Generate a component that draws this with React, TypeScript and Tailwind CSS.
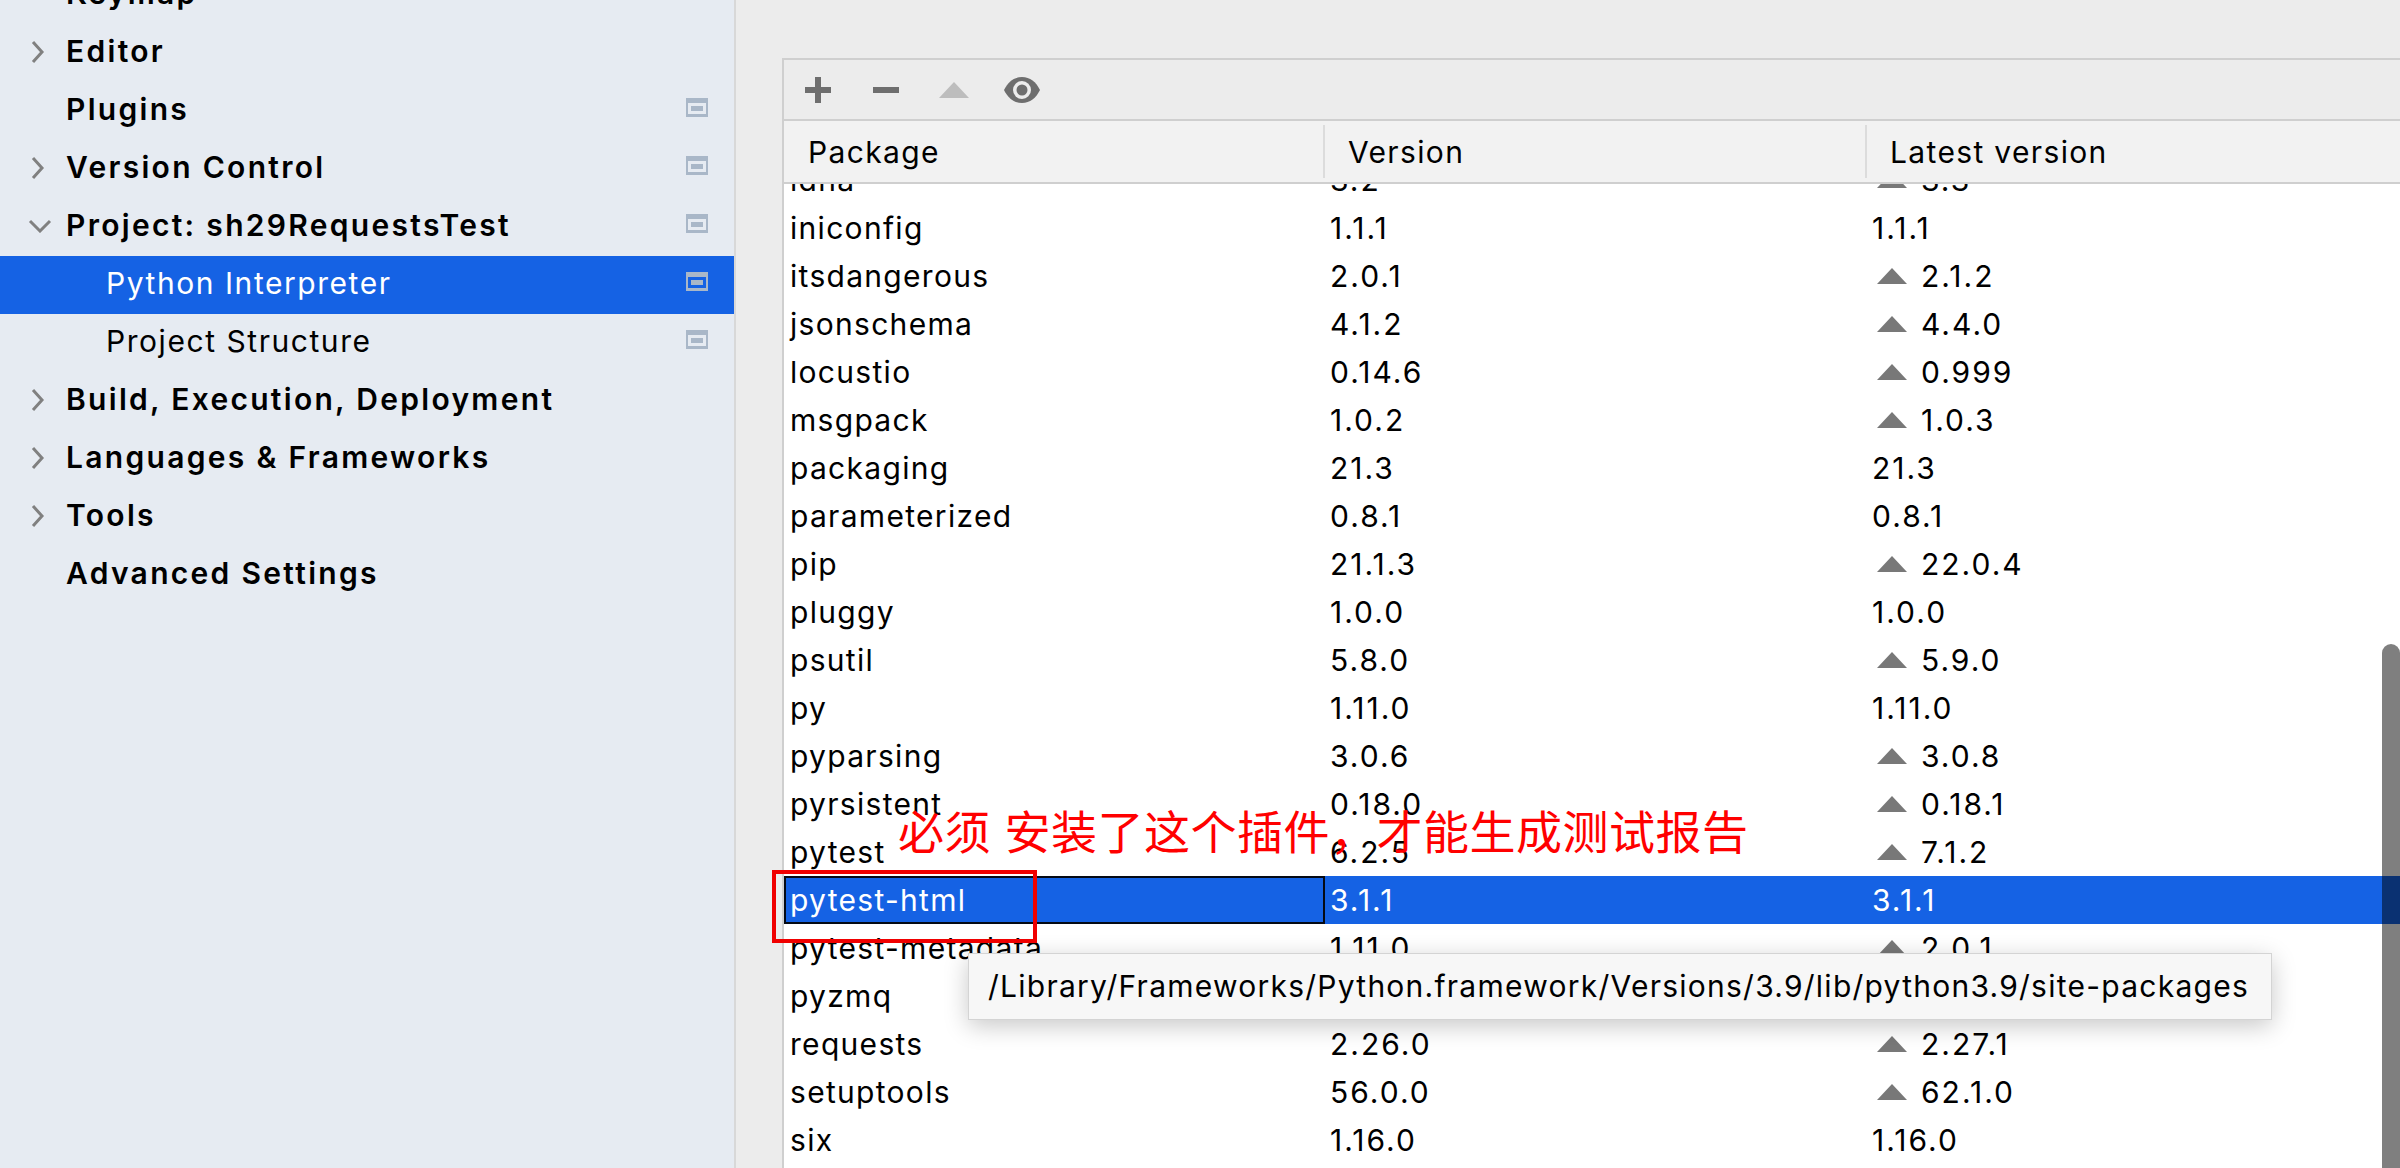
import React from 'react';

type Pkg = { name: string; version: string; latest: string; upgrade?: boolean };

const packages: Pkg[] = [
  { name: 'idna', version: '3.2', latest: '3.3', upgrade: true },
  { name: 'iniconfig', version: '1.1.1', latest: '1.1.1' },
  { name: 'itsdangerous', version: '2.0.1', latest: '2.1.2', upgrade: true },
  { name: 'jsonschema', version: '4.1.2', latest: '4.4.0', upgrade: true },
  { name: 'locustio', version: '0.14.6', latest: '0.999', upgrade: true },
  { name: 'msgpack', version: '1.0.2', latest: '1.0.3', upgrade: true },
  { name: 'packaging', version: '21.3', latest: '21.3' },
  { name: 'parameterized', version: '0.8.1', latest: '0.8.1' },
  { name: 'pip', version: '21.1.3', latest: '22.0.4', upgrade: true },
  { name: 'pluggy', version: '1.0.0', latest: '1.0.0' },
  { name: 'psutil', version: '5.8.0', latest: '5.9.0', upgrade: true },
  { name: 'py', version: '1.11.0', latest: '1.11.0' },
  { name: 'pyparsing', version: '3.0.6', latest: '3.0.8', upgrade: true },
  { name: 'pyrsistent', version: '0.18.0', latest: '0.18.1', upgrade: true },
  { name: 'pytest', version: '6.2.5', latest: '7.1.2', upgrade: true },
  { name: 'pytest-html', version: '3.1.1', latest: '3.1.1' },
  { name: 'pytest-metadata', version: '1.11.0', latest: '2.0.1', upgrade: true },
  { name: 'pyzmq', version: '22.3.0', latest: '22.3.0' },
  { name: 'requests', version: '2.26.0', latest: '2.27.1', upgrade: true },
  { name: 'setuptools', version: '56.0.0', latest: '62.1.0', upgrade: true },
  { name: 'six', version: '1.16.0', latest: '1.16.0' },
];

const navItems = [
  { label: 'Keymap', level: 0 },
  { label: 'Editor', level: 0, arrow: 'right' },
  { label: 'Plugins', level: 0, badge: true },
  { label: 'Version Control', level: 0, arrow: 'right', badge: true },
  { label: 'Project: sh29RequestsTest', level: 0, arrow: 'down', badge: true },
  { label: 'Python Interpreter', level: 1, badge: true, selected: true },
  { label: 'Project Structure', level: 1, badge: true },
  { label: 'Build, Execution, Deployment', level: 0, arrow: 'right' },
  { label: 'Languages & Frameworks', level: 0, arrow: 'right' },
  { label: 'Tools', level: 0, arrow: 'right' },
  { label: 'Advanced Settings', level: 0 },
];

const UpTriangle = ({ fill = '#787878' }: { fill?: string }) => (
  <svg width="30" height="16" viewBox="0 0 30 16" className="shrink-0">
    <path d="M15 0L30 16H0z" fill={fill} />
  </svg>
);

const Arrow = ({ dir }: { dir?: string }) => (
  <span className="w-[35px] shrink-0 flex justify-start">
    {dir === 'right' && (
      <svg width="14" height="24" viewBox="0 0 14 24">
        <path d="M2 2l9 10-9 10" fill="none" stroke="#808080" strokeWidth="3" />
      </svg>
    )}
    {dir === 'down' && (
      <svg width="24" height="14" viewBox="0 0 24 14" className="-ml-[3px]">
        <path d="M2 2l10 10L22 2" fill="none" stroke="#808080" strokeWidth="3" />
      </svg>
    )}
  </span>
);

// little "project level" window glyph at the end of a row
const ProjectBadge = ({ selected }: { selected?: boolean }) => (
  <span className="w-[22px] h-[19px] mb-[4px] shrink-0 bg-[#a9b7c8] pt-[5px] px-[2px] pb-[3px] flex">
    <span className={`flex-1 p-[3px] flex ${selected ? 'bg-[#1562e4]' : 'bg-[#e6ebf2]'}`}>
      <span className="flex-1 bg-[#a9b7c8]" />
    </span>
  </span>
);

export default function App() {
  return (
    <div className="relative flex h-[1168px] w-[2400px] overflow-hidden bg-[#ececec] font-['Inter','Noto_Sans_CJK_SC',sans-serif] text-black">
      {/* settings tree */}
      <aside className="w-[734px] shrink-0 bg-[#e6ebf2] overflow-hidden">
        <div className="-mt-[34px]">
          {navItems.map((item) => (
            <div
              key={item.label}
              className={`h-[58px] flex items-center pb-[3px] pr-[26px] text-[30px] ${item.selected ? 'bg-[#1562e4] text-white' : ''} ${item.level === 0 ? 'pl-[31px] font-semibold tracking-[2.3px]' : 'pl-[106px] tracking-[1.55px]'}`}
            >
              {item.level === 0 && <Arrow dir={item.arrow} />}
              <span className="flex-1 whitespace-nowrap">{item.label}</span>
              {item.badge && <ProjectBadge selected={item.selected} />}
            </div>
          ))}
        </div>
      </aside>
      <div className="w-[2px] shrink-0 bg-[#d8d8d8]" />

      {/* packages panel */}
      <main className="flex-1 min-w-0 pl-[46px] pt-[58px]">
        <div className="h-full border-l-2 border-t-2 border-[#cfcfcf] flex flex-col">
          <div className="h-[61px] flex items-center border-b-2 border-[#cfcfcf] bg-[#ececec] pl-[21px] gap-[42px] shrink-0">
            <svg width="26" height="26" viewBox="0 0 26 26">
              <path d="M10 0h6v10h10v6H16v10h-6V16H0v-6h10z" fill="#6e6e6e" />
            </svg>
            <svg width="26" height="26" viewBox="0 0 26 26">
              <path d="M0 10h26v6H0z" fill="#6e6e6e" />
            </svg>
            <svg width="30" height="16" viewBox="0 0 30 16" className="-ml-[2px]">
              <path d="M15 0L30 16H0z" fill="#bdbdbd" />
            </svg>
            <svg width="36" height="26" viewBox="0 0 36 26" className="-ml-[7px]">
              <path d="M18 0C26 0 32 5 36 13 32 21 26 26 18 26S4 21 0 13C4 5 10 0 18 0z" fill="#6e6e6e" />
              <circle cx="18" cy="13" r="9" fill="#ececec" />
              <circle cx="18" cy="13" r="5.5" fill="#6e6e6e" />
            </svg>
          </div>
          <div className="h-[63px] flex shrink-0 bg-[#f2f2f2] border-b-2 border-[#cfcfcf] text-[30px] tracking-[1.35px]">
            <div className="w-[541px] pl-[24px] pt-[2px] flex items-center border-r-2 border-[#dcdcdc] my-[4px]">Package</div>
            <div className="w-[542px] pl-[23px] pt-[2px] flex items-center border-r-2 border-[#dcdcdc] my-[4px]">Version</div>
            <div className="flex-1 pl-[23px] pt-[2px] flex items-center">Latest version</div>
          </div>
          <div className="flex-1 min-h-0 overflow-hidden bg-white">
            <div className="-mt-[28px]">
              {packages.map((p) => {
                const selected = p.name === 'pytest-html';
                return (
                  <div key={p.name} className={`h-[48px] flex items-center text-[30px] tracking-[1.3px] ${selected ? 'bg-[#1562e4] text-white' : ''}`}>
                    <div className={`w-[541px] h-full flex items-center ${selected ? 'border-2 border-[#050a14] pl-[4px]' : 'pl-[6px]'}`}>{p.name}</div>
                    <div className="w-[542px] pl-[5px] tracking-[2px]">{p.version}</div>
                    <div className="flex-1 flex items-center gap-[14px] pl-[5px] tracking-[2px]">
                      {p.upgrade && <span className="pl-[5px] flex"><UpTriangle /></span>}
                      <span>{p.latest}</span>
                    </div>
                  </div>
                );
              })}
            </div>
          </div>
        </div>
      </main>

      {/* overlays */}
      <div className="absolute left-[2382px] top-[644px] w-[18px] h-[530px] rounded-t-[9px] bg-black/50" />
      <div className="absolute left-[968px] top-[953px] w-[1304px] h-[67px] bg-[#f7f7f7] border border-[#d4d4d4] shadow-[0_6px_24px_rgba(0,0,0,0.22)] flex items-center pl-[19px] text-[30px] tracking-[1.25px] whitespace-nowrap">
        /Library/Frameworks/Python.framework/Versions/3.9/lib/python3.9/site-packages
      </div>
      <div className="absolute left-[772px] top-[870px] w-[265px] h-[73px] border-[4px] border-[#f00000]" />
      <div className="absolute left-[898px] top-[802px] text-[46px] leading-[60px] tracking-[0.5px] text-[#ff0000] whitespace-nowrap">
        必须 安装了这个插件，才能生成测试报告
      </div>
    </div>
  );
}
